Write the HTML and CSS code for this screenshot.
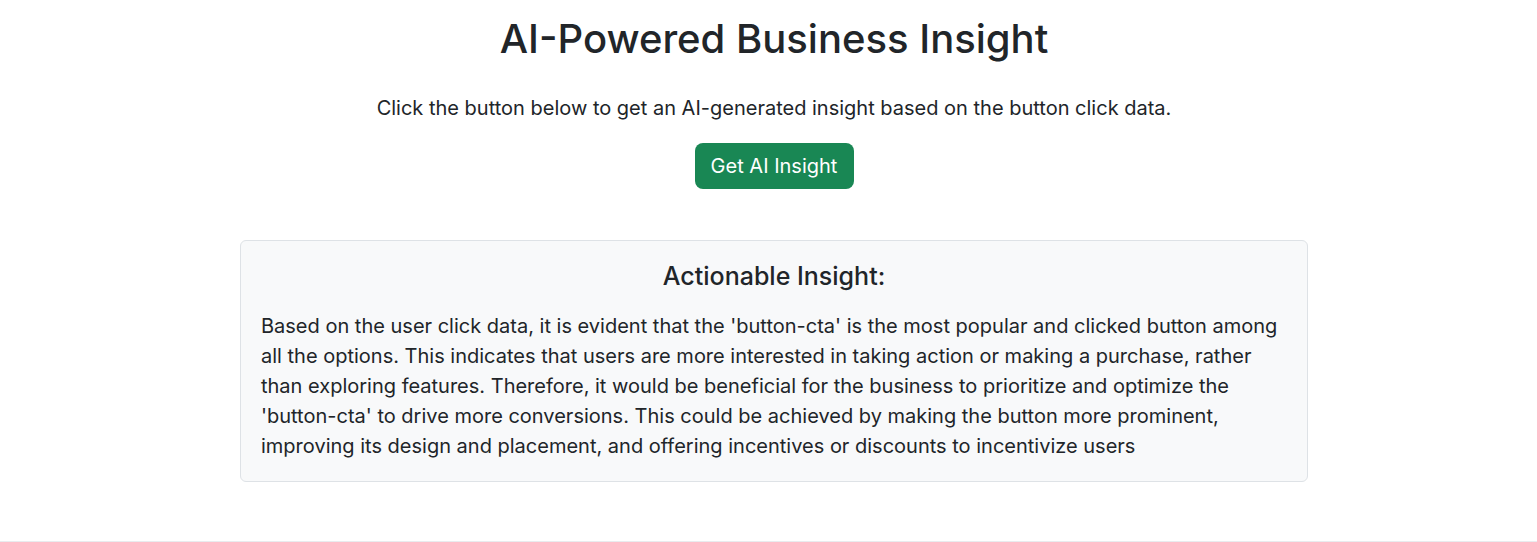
FILE: index.html
```html
<!DOCTYPE html>
<html lang="en">
<head>
<meta charset="utf-8">
<title>AI-Powered Business Insight</title>
<link rel="stylesheet" href="styles.css">
</head>
<body>
<main class="page">
  <h1 class="title">AI-Powered Business Insight</h1>
  <p class="lead">Click the button below to get an AI-generated insight based on the button click data.</p>
  <button class="btn-insight" type="button">Get AI Insight</button>
  <section class="insight-card">
    <h3 class="insight-title">Actionable Insight:</h3>
    <p class="insight-text">Based on the user click data, it is evident that the 'button-cta' is the most popular and clicked button among all the options. This indicates that users are more interested in taking action or making a purchase, rather than exploring features. Therefore, it would be beneficial for the business to prioritize and optimize the 'button-cta' to drive more conversions. This could be achieved by making the button more prominent, improving its design and placement, and offering incentives or discounts to incentivize users</p>
  </section>
</main>
<footer class="footer"></footer>
</body>
</html>
```
FILE: styles.css
```css
* { box-sizing: border-box; }
html, body { margin: 0; padding: 0; }
body {
  font-family: Inter, "Noto Sans", sans-serif;
  color: #212529;
  background: #fff;
  height: 542px;
  display: flex;
  flex-direction: column;
}
.page {
  flex: 1;
  display: flex;
  flex-direction: column;
  align-items: center;
  padding: 15px 0 0 11px;
}
.title {
  font-size: 40px;
  font-weight: 500;
  line-height: 48px;
  margin: 0;
}
.lead {
  font-size: 20px;
  line-height: 30px;
  margin: 30px 0 0;
}
.btn-insight {
  margin-top: 20px;
  font-family: inherit;
  font-size: 20px;
  line-height: 30px;
  padding: 8px 16px;
  color: #fff;
  background: #198754;
  border: 0;
  border-radius: 8px;
  height: 46px;
  width: 159px;
}
.insight-card {
  margin-top: 51px;
  width: 1068px;
  background: #f8f9fa;
  border: 1px solid #dee2e6;
  border-radius: 6px;
  padding: 20px;
}
.insight-title {
  margin: 0 0 20px;
  text-align: center;
  font-size: 25px;
  font-weight: 500;
  line-height: 30px;
}
.insight-text {
  margin: 0;
  font-size: 20px;
  line-height: 30px;
}
.footer {
  height: 1px;
  border-top: 1px solid #e9ecef;
}
```
